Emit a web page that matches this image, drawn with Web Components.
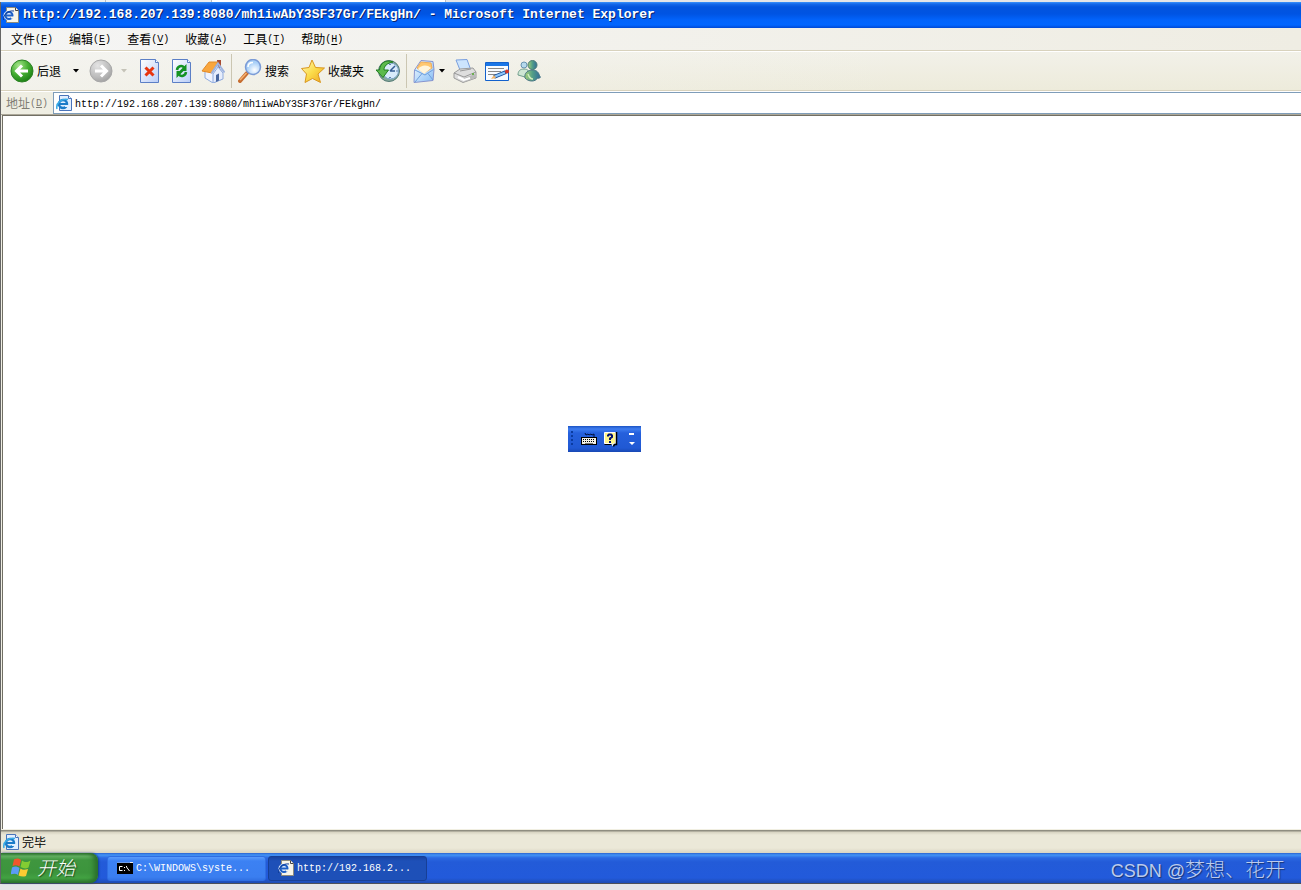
<!DOCTYPE html>
<html lang="zh-CN">
<head>
<meta charset="utf-8">
<title>Microsoft Internet Explorer</title>
<style>
  html, body { margin: 0; }
  body {
    --mono: "Liberation Mono", "Noto Sans CJK SC", monospace;
    --tan: #d8d2bd;
    font: 12px/16px "Noto Sans CJK SC", sans-serif;
    color: #000;
    background: #e4e5e7;
  }
</style>
</head>
<body>
<xp-desktop>
  <ie-window slot="window">
    <title-bar slot="title">http://192.168.207.139:8080/mh1iwAbY3SF37Gr/FEkgHn/ - Microsoft Internet Explorer</title-bar>
    <menu-bar slot="bars">
      <menu-entry key="F">文件</menu-entry>
      <menu-entry key="E">编辑</menu-entry>
      <menu-entry key="V">查看</menu-entry>
      <menu-entry key="A">收藏</menu-entry>
      <menu-entry key="T">工具</menu-entry>
      <menu-entry key="H">帮助</menu-entry>
    </menu-bar>
    <tool-bar slot="bars">
      <tool-button icon="back" menu labelled>后退</tool-button>
      <tool-button icon="forward" menu disabled name="前进"></tool-button>
      <tool-button icon="stop" name="停止"></tool-button>
      <tool-button icon="refresh" name="刷新"></tool-button>
      <tool-button icon="home" name="主页"></tool-button>
      <tool-separator></tool-separator>
      <tool-button icon="search" labelled>搜索</tool-button>
      <tool-button icon="star" labelled>收藏夹</tool-button>
      <tool-button icon="history" name="历史"></tool-button>
      <tool-separator></tool-separator>
      <tool-button icon="mail" menu snug name="邮件"></tool-button>
      <tool-button icon="print" name="打印"></tool-button>
      <tool-button icon="edit" name="编辑"></tool-button>
      <tool-button icon="people" name="Messenger"></tool-button>
    </tool-bar>
    <address-bar slot="bars" value="http://192.168.207.139:8080/mh1iwAbY3SF37Gr/FEkgHn/"></address-bar>
    <language-bar slot="float"></language-bar>
    <status-bar slot="status">完毕</status-bar>
  </ie-window>
  <task-bar slot="taskbar">
    <task-button icon="console">C:\WINDOWS\syste...</task-button>
    <task-button icon="page" active>http://192.168.2...</task-button>
    <water-mark slot="end"><span slot="latin">CSDN @</span>梦想、花开</water-mark>
  </task-bar>
</xp-desktop>

<script>
const ICONS = {
  back: ['0 0 24 24', `<defs><radialGradient id="g" cx=".35" cy=".25" r=".85"><stop offset="0" stop-color="#a5e58a"/><stop offset=".5" stop-color="#45ae32"/><stop offset="1" stop-color="#14780f"/></radialGradient></defs>
    <circle cx="12" cy="12" r="11" fill="url(#g)" stroke="#2d8225"/><path d="M18 12H7M12 6.500L6.500 12l5.500 5.500" fill="none" stroke="#fff" stroke-width="3"/>`],
  forward: ['0 0 24 24', `<defs><radialGradient id="g" cx=".35" cy=".25" r=".85"><stop offset="0" stop-color="#e4e4e4"/><stop offset=".6" stop-color="#bdbdbd"/><stop offset="1" stop-color="#9b9b9b"/></radialGradient></defs>
    <circle cx="12" cy="12" r="11" fill="url(#g)" stroke="#a8a8a8"/><path d="M6 12h11M12 6.500l5.500 5.500-5.500 5.500" fill="none" stroke="#fff" stroke-width="3"/>`],
  stop: ['0 0 24 24', `<defs><linearGradient id="p" x2="1" y2="1"><stop stop-color="#fff"/><stop offset="1" stop-color="#b9cdf8"/></linearGradient></defs>
    <path d="M3.500.500h15l3 3v20h-18z" fill="url(#p)" stroke="#5b7fc6"/><path d="M18.500.500v3h3" fill="#fff" stroke="#5b7fc6"/><path d="M8.500 8.500l8 8M16.500 8.500l-8 8" stroke="#e8340f" stroke-width="3"/>`],
  refresh: ['0 0 24 24', `<defs><linearGradient id="p" x2="1" y2="1"><stop stop-color="#fff"/><stop offset="1" stop-color="#b9cdf8"/></linearGradient></defs>
    <path d="M3.500.500h15l3 3v20h-18z" fill="url(#p)" stroke="#5b7fc6"/><path d="M18.500.500v3h3" fill="#fff" stroke="#5b7fc6"/>
    <path d="M8 11c.500-4 5-5 7-2.500M17 13c-.500 4-5 5-7 2.500" fill="none" stroke="#149222" stroke-width="2.500"/><path d="M17.500 5v7h-7zM7.500 19v-7h7z" fill="#149222"/>`],
  home: ['0 0 24 24', `<path d="M16 1h4v8h-4z" fill="#a84c32"/><path d="M4 11l12-5 5 7v7l-9 4-8-5z" fill="#f0f4ff" stroke="#8faadd"/><path d="M12 15l5-7 5 6v6l-10 4z" fill="#e6edfc" stroke="#8faadd"/>
    <path d="M1 12L8 3l9 0-6 11z" fill="#f9a63d" stroke="#e28a28"/><path d="M10.500 14.500l6.500-10 6.500 9" fill="none" stroke="#9eb4e0" stroke-width="2"/><path d="M15 16l3-1.500v7L15 23z" fill="#48669f"/>`],
  search: ['0 0 24 24', `<defs><radialGradient id="l" cx=".6" cy=".7"><stop stop-color="#fff"/><stop offset="1" stop-color="#a9d0f8"/></radialGradient></defs>
    <path d="M9 14l-7 8" stroke="#c66d30" stroke-width="4" stroke-linecap="round"/><path d="M8.500 14l-6.500 7" stroke="#f6b271" stroke-width="1.500"/><circle cx="15" cy="8" r="7.500" fill="url(#l)" stroke="#7b9bd6" stroke-width="1.500"/><path d="M10 8c0-3 2-4.500 5-4.500" fill="none" stroke="#fff" stroke-width="1.500"/>`],
  star: ['0 0 24 24', `<defs><linearGradient id="s" x2="1" y2="1"><stop stop-color="#fffbc0"/><stop offset=".5" stop-color="#fbdc4b"/><stop offset="1" stop-color="#efa31d"/></linearGradient></defs>
    <path d="M11 1l3.500 7.500 9 .500-6.500 6 2.500 8.500-8-4-7.500 4 1.500-8.500-5-5.500 7.500-1z" fill="url(#s)" stroke="#d99720" stroke-linejoin="round"/>`],
  history: ['0 0 24 24', `<circle cx="13" cy="12" r="10.500" fill="#86a99c" stroke="#557b76"/><circle cx="14.500" cy="12" r="8" fill="#d9ebfb" stroke="#78a0c4"/><path d="M14 12l5-5M14 12h5M14 5v1M14 18v1M20.500 12h1" stroke="#365d94" stroke-width="1.500"/>
    <path d="M17 3C10 0 4 4 3.500 11H0l7 7.500 5.500-7.500H8c0-4 3-7 9-8z" fill="#5cba4c" stroke="#217d22"/>`],
  mail: ['0 0 24 24', `<defs><linearGradient id="m" x2="1" y2="1"><stop stop-color="#f4fbff"/><stop offset="1" stop-color="#86bdf5"/></linearGradient></defs>
    <path d="M1.500 11L8 1.500l12 1 1 8-1 11-19 2z" fill="url(#m)" stroke="#8795cf"/><path d="M4 9l4-6 10 1 1 5-8 5z" fill="#ffc870" stroke="#f0ae5a"/><path d="M5 10c3-4 9-5 13-1l-7 6z" fill="#fff5dc"/><path d="M2 11l10 5 8.500-5.500M2 23l7-8.500M20 21l-5-6.500" fill="none" stroke="#6e9fdd"/>`],
  print: ['0 0 24 24', `<path d="M3 1l11-.500 4 11-10 2z" fill="#cce4fd" stroke="#7a9fde"/><path d="M1 14l6-4 13-1 3 4v6l-13 4.500L1 19z" fill="#dedede" stroke="#9b9b9b"/><path d="M1 14l10 4 12-5M7 12l11-2" fill="none" stroke="#999"/><path d="M11 19v4l11-4v-4z" fill="#bbb"/><path d="M5 18l6 3 6-2" fill="none" stroke="#fff" stroke-width="2"/><path d="M19 15h2" stroke="#6bad50" stroke-width="2"/>`],
  edit: ['0 0 24 24', `<path d="M.500 3.500h23v18H.500z" fill="#f7fbff" stroke="#1261cd"/><path d="M1 4h22v3H1z" fill="#1976e7"/><path d="M3 9.500h16M3 12.500h13M3 15.500h8" stroke="#888"/><path d="M9 18l12-5" stroke="#174d98" stroke-width="4"/><path d="M10 17.500l10-4" stroke="#8dc6fa" stroke-width="2"/><path d="M6 20l3-4 2 3z" fill="#f4b669"/><circle cx="22" cy="12.500" r="2" fill="#d83827"/>`],
  people: ['0 0 24 24', `<defs><linearGradient id="q" x2="1"><stop stop-color="#a5cf78"/><stop offset=".5" stop-color="#529d87"/><stop offset="1" stop-color="#316b9b"/></linearGradient></defs>
    <circle cx="7" cy="6" r="3" fill="#b5d9ec" stroke="#6893b0"/><path d="M1 16c0-4 2-6 6-6s5 2 5 6l-4 2z" fill="#cfe6d4" stroke="#6f9d8c"/><circle cx="15.500" cy="6" r="4.500" fill="url(#q)" stroke="#4c7c73"/><path d="M8 19c-1-5 3-8 7.500-8 4.500 0 6.500 3 7 6l1 1c-1 2-3 1-3 1-2 4-9 4-12.500 0z" fill="url(#q)" stroke="#447482"/><path d="M11 15c1 3 3 5 5 5" stroke="#d2edbc" stroke-width="1.500" fill="none"/>`],
  page: ['0 0 16 16', `<path d="M3.500.500h9l3 3v12h-12z" fill="#f7f5e9" stroke="#8c8a7c"/><path d="M12.500.500v3h3" fill="#fff" stroke="#444"/><ellipse cx="6" cy="8.500" rx="5.500" ry="5" fill="#e8f2ff"/><circle cx="6" cy="8.500" r="3.500" fill="none" stroke="#1d5fc4" stroke-width="2"/><path d="M3 8.500h7" stroke="#1d5fc4" stroke-width="2"/><path d="M8 10.500h3" stroke="#f7f5e9" stroke-width="2"/><path d="M.500 13C0 8 5 3 11 4" fill="none" stroke="#123f9a"/>`],
  site: ['0 0 16 16', `<path d="M3.500.500h9l3 3v12h-12z" fill="#e2efff" stroke="#4a74ba"/><path d="M12.500.500v3h3" fill="#fff" stroke="#4a74ba"/><circle cx="7" cy="9" r="4" fill="#e2efff" stroke="#1c7bc8" stroke-width="2.500"/><path d="M4 9h7" stroke="#1c7bc8" stroke-width="2"/><path d="M9 11h4" stroke="#e2efff" stroke-width="2"/><path d="M1 14C-.500 8 6 3 12 4.500" fill="none" stroke="#3aabe5" stroke-width="1.500"/>`],
  console: ['0 0 16 16', `<path d="M0 2h16v12H0z" fill="#000"/><path d="M0 2h13v1H0z" fill="#6f9ce8"/><path d="M13 2h3v1h-3z" fill="#eee"/><path d="M5.500 6.500h-3v4h3M7.500 7v1M7.500 10v1M9.500 6v1l3 4" fill="none" stroke="#fff"/>`],
  flag: ['0 0 20 20', `<path d="M3 2.500c3-1.500 5-1 7 .500L8.500 9.500C6 8 4 8 1.500 9z" fill="#f0562b"/><path d="M11 3.500c3 2 5 2 8.500 0l-2 7c-3 1.500-5 1-8-.500z" fill="#83cc32"/><path d="M1 10.500c3-1.500 5-1 7.500.500L7 18c-2-1.500-4-1.500-7.500-.500z" fill="#5b9cf5"/><path d="M9.500 11.500c2 1.500 4 1.500 7.500.500l-2 7c-3 1-5 .500-7.500-.500z" fill="#fbcb32"/>`],
  keyboard: ['0 0 16 16', `<path d="M4 2l1 2 2-1 1 1 2-1 1 1 2-1v3" fill="none" stroke="#00113d"/><path d="M0 6h16v8H0z" fill="#000"/><path d="M1 7h14v6H1z" fill="#f3f0e4"/><path d="M2 8.500h12M2 10.500h12" stroke="#000" stroke-dasharray="1 1"/><path d="M4 12.500h8" stroke="#777"/>`],
  help: ['0 0 16 16', `<path d="M1.500 1.500h11v11h-2l-1 2-1-2h-7z" fill="#fff68a" stroke="#fff"/><path d="M13.500 1v12.500h-2l-1 2" fill="none" stroke="#000" stroke-width="1.500"/><path d="M1.500 13.500h7" stroke="#000"/><path d="M5 5.500v-1l1-1h2l1 1v1.500l-2 1.500v1.500" fill="none" stroke="#001073" stroke-width="2"/><path d="M6 10h2v2H6z" fill="#001073"/>`]
};

function define(name, html, setup) {
  const template = document.createElement('template');
  template.innerHTML = html;
  customElements.define(name, class extends HTMLElement {
    constructor() {
      super();
      this.attachShadow({ mode: 'open' }).append(template.content.cloneNode(true));
    }
    connectedCallback() {
      if (setup) setup(this, this.shadowRoot);
    }
  });
}

define('xp-icon', `<style>:host{display:block;flex:none;width:16px;height:16px} svg{display:block;width:100%;height:100%}</style><svg aria-hidden="true"></svg>`, (el, root) => {
  const [box, art] = ICONS[el.getAttribute('name')];
  const svg = root.querySelector('svg');
  svg.setAttribute('viewBox', box);
  svg.innerHTML = art;
});

define('xp-desktop', `<style>
  :host{display:flex;flex-direction:column;min-height:100vh;box-sizing:border-box;padding-bottom:6px}
  .behind{display:flex;height:2px}
  .behind i{width:105px;background:#edeff0;border-right:1px solid #b8bcc0}
  .behind i:nth-child(3){width:233px;background:#fff}
  .screen{flex:1;display:flex;flex-direction:column;border-left:1px solid #666;border-bottom:1px solid #4c4f58}
  </style><div class="behind"><i></i><i></i><i></i></div><div class="screen"><slot name="window"></slot><slot name="taskbar"></slot></div>`);

define('ie-window', `<style>
  :host{flex:1;display:flex;flex-direction:column;background:#efeee3}
  main{flex:1;position:relative;margin-left:1px;background:#fff;border:solid #716f64;border-width:1px 0 0 1px}
  </style><slot name="title"></slot><slot name="bars"></slot><main><slot name="float"></slot></main><slot name="status"></slot>`);

define('title-bar', `<style>
  :host{display:block;background:linear-gradient(#3b93fb 0,#1569ea 2px,#0354dd 5px,#0054e3 12px,#0263fb 18px,#0166ff 23px,#0048d4 26px)}
  header{display:flex;align-items:center;gap:4px;height:26px;padding-left:2px}
  h1{margin:0;font:bold 13px/16px var(--mono);color:#fff;text-shadow:1px 1px #08246b;white-space:nowrap}
  </style><header><xp-icon name="page"></xp-icon><h1><slot></slot></h1></header>`);

define('menu-bar', `<style>
  :host{display:block;border-bottom:1px solid var(--tan);background:linear-gradient(90deg,#f5f5f4,#efede3)}
  nav{display:flex;height:22px;padding-left:2px}
  </style><nav><slot></slot></nav>`);

define('menu-entry', `<style>
  :host{display:block}
  button{display:flex;align-items:center;height:22px;padding:0 8px;border:0;background:none;font:inherit;color:inherit}
  .key{padding-top:2px;font:10px/16px var(--mono)}
  u{text-underline-offset:2px}
  </style><button type="button"><slot></slot><span class="key">(<u></u>)</span></button>`, (el, root) => {
  root.querySelector('u').textContent = el.getAttribute('key');
});

define('tool-bar', `<style>
  :host{display:flex;align-items:center;height:38px;padding-left:5px;border-top:1px solid #fff;border-bottom:1px solid var(--tan);
    background:linear-gradient(90deg,#f5f5f3aa,#efeddd00 70%),linear-gradient(#f2f1e9,#edebdb)}
  </style><slot></slot>`);

define('tool-separator', `<style>:host{display:block;width:1px;height:34px;margin:0 2px;background:#cbc6b2}</style>`);

define('tool-button', `<style>
  :host{display:flex;align-items:center}
  button{border:0;background:none;font:inherit;color:inherit;padding:0}
  .main{display:flex;align-items:center;gap:3px;padding:0 4px;white-space:nowrap}
  :host([labelled]) .main{padding-right:8px}
  :host([snug]) .main{padding-right:0}
  xp-icon{width:24px;height:24px}
  .drop{display:none;width:16px;padding-left:4px}
  :host([menu]) .drop{display:block}
  :host([snug]) .drop{width:12px;padding-left:2px}
  .drop svg{display:block;width:6px;height:4px}
  :host([disabled]) .drop{color:#c5c3b8}
  </style><button class="main" type="button"><slot></slot></button><button class="drop" type="button" aria-label="更多"><svg viewBox="0 0 6 4"><path d="M0 0h6L3 3.500z" fill="currentColor"/></svg></button>`, (el, root) => {
  const icon = document.createElement('xp-icon');
  icon.setAttribute('name', el.getAttribute('icon'));
  const main = root.querySelector('.main');
  main.prepend(icon);
  if (el.hasAttribute('name')) {
    main.setAttribute('aria-label', el.getAttribute('name'));
    root.querySelector('slot').remove();
  }
  if (el.hasAttribute('disabled')) root.querySelectorAll('button').forEach(b => { b.disabled = true; });
});

define('address-bar', `<style>
  :host{display:flex;border-top:1px solid #fff;border-bottom:1px solid #aca899}
  label{display:flex;align-items:center;width:47px;padding-left:5px;color:#7f7d74;white-space:nowrap}
  .key{padding-top:2px;font:10px/16px var(--mono)}
  .field{flex:1;display:flex;align-items:center;gap:3px;height:20px;padding-left:2px;background:#fff;border:1px solid #7f9db9;border-right:0}
  input{flex:1;min-width:0;height:20px;box-sizing:border-box;padding:2px 0 0;border:0;outline:0;background:none;color:#000;font:10px/16px var(--mono)}
  </style><label for="url">地址<span class="key">(<u>D</u>)</span></label><div class="field"><xp-icon name="site"></xp-icon><input id="url" type="text" spellcheck="false"></div>`, (el, root) => {
  root.querySelector('input').value = el.getAttribute('value');
});

define('language-bar', `<style>
  :host{position:absolute;left:565px;top:310px;display:flex;align-items:center;gap:6px;box-sizing:border-box;width:73px;height:26px;padding:0 6px 0 3px;
    background:linear-gradient(#1c54c4 0,#3e7df0 3px,#2560dc 7px,#2059d4 22px,#1848b4)}
  .grip{width:4px;height:16px;background:radial-gradient(circle at 1px 1px,#0a3ba0 1px,#0000 1px) 0 0/4px 4px}
  button{display:block;padding:0;border:0;background:none}
  .more{margin-left:auto}
  .more svg{display:block;width:6px;height:14px}
  </style><span class="grip"></span><button type="button" aria-label="键盘"><xp-icon name="keyboard"></xp-icon></button><button type="button" aria-label="帮助"><xp-icon name="help"></xp-icon></button><button class="more" type="button" aria-label="选项"><svg viewBox="0 0 6 14"><path d="M0 1h5v2H0zM0 10h6l-3 3z" fill="#fff"/></svg></button>`);

define('status-bar', `<style>
  :host{display:block;border-top:1px solid #f1efe2;background:linear-gradient(#8f8d80 0,#8f8d80 1px,#d6d2c0 2px,#ebe8d8 5px,#ebe8d8 18px,#d9d5c2)}
  footer{display:flex;align-items:center;gap:3px;height:23px;padding:1px 0 0 2px;box-sizing:border-box}
  </style><footer role="status"><xp-icon name="site"></xp-icon><span><slot></slot></span></footer>`);

define('task-bar', `<style>
  :host{display:flex;align-items:center;height:30px;background:linear-gradient(#2a62d0 0,#4394f5 2px,#2b68e2 5px,#235bd8 9px,#225adb 25px,#1d4bb2 30px)}
  .start{display:flex;align-items:center;gap:6px;align-self:stretch;width:97px;margin-right:9px;padding:0 0 2px 10px;border:0;border-radius:0 8px 8px 0;
    background:linear-gradient(#2e7330 0,#66b465 3px,#3f963f 7px,#3c953c 20px,#43a343 25px,#2c762d);box-shadow:inset -4px 0 5px #2a6f2b,1px 0 2px #123d91;
    color:#fff;font:italic 300 19px/24px "Noto Sans CJK SC",sans-serif;text-shadow:1px 1px 1px #1c4a1c;white-space:nowrap}
  .start xp-icon{width:20px;height:20px}
  .tasks{flex:1;display:flex;gap:2px}
  </style><button class="start" type="button"><xp-icon name="flag"></xp-icon>开始</button><div class="tasks"><slot></slot></div><slot name="end"></slot>`);

define('task-button', `<style>
  :host{display:block}
  button{display:flex;align-items:center;gap:3px;box-sizing:border-box;width:159px;height:25px;padding:0 9px;border:1px solid #2f6ee2;border-radius:3px;
    background:linear-gradient(#5a9bfb,#3c81f3 4px,#3a7ef0 20px,#3272e4);color:#fff;font:10px/16px var(--mono);white-space:nowrap}
  .label{padding-top:2px}
  :host([active]) button{border-color:#173f96;background:linear-gradient(#1742a0,#1e50b8 4px,#1d50b8)}
  </style><button type="button"><span class="label"><slot></slot></span></button>`, (el, root) => {
  const icon = document.createElement('xp-icon');
  icon.setAttribute('name', el.getAttribute('icon'));
  root.querySelector('button').prepend(icon);
});

define('water-mark', `<style>
  :host{display:flex;align-items:baseline;padding:4px 16px 0 0;font:300 20px/26px "Noto Sans CJK SC",sans-serif;color:#bccbed;text-shadow:1px 1px 1px #173575;white-space:nowrap}
  .latin{font:18px/26px "Liberation Sans",sans-serif;white-space:pre}
  </style><span class="latin"><slot name="latin"></slot></span><span><slot></slot></span>`);
</script>
</body>
</html>
